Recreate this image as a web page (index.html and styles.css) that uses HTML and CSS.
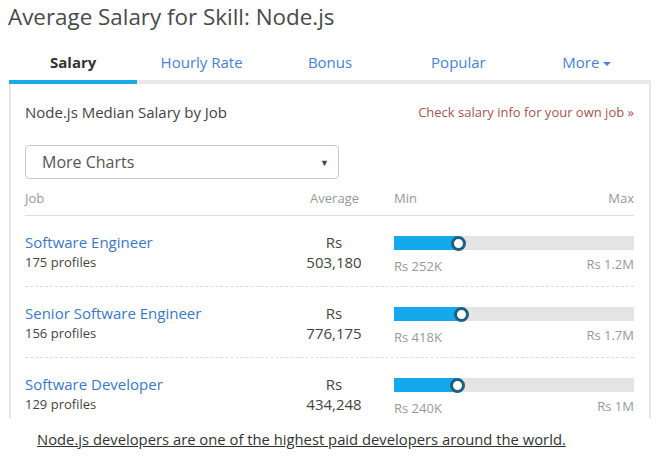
FILE: index.html
```html
<!DOCTYPE html>
<html lang="en-US">
<head>
<meta charset="utf-8">
<link rel="stylesheet" href="styles.css">
</head>
<body>

<h1 class="title">Average Salary for Skill: Node.js</h1>

<div class="tabs">
  <a class="tab active">Salary</a>
  <a class="tab">Hourly Rate</a>
  <a class="tab">Bonus</a>
  <a class="tab">Popular</a>
  <a class="tab">More <span class="caret"></span></a>
</div>

<div class="panel">
  <div class="panel-head">
    <span class="panel-title">Node.js Median Salary by Job</span>
    <a class="own-job">Check salary info for your own job &raquo;</a>
  </div>

  <div class="charts-select">
    <span>More Charts</span>
    <span class="arrow">&#9660;</span>
  </div>

  <div class="row head">
    <div class="job">Job</div>
    <div class="avg">Average</div>
    <div class="range">
      <span>Min</span>
      <span>Max</span>
    </div>
  </div>

  <div class="row">
    <div class="job">
      <a class="job-name">Software Engineer</a>
      <div>175 profiles</div>
    </div>
    <div class="avg">Rs<br>503,180</div>
    <div class="range">
      <div class="bar"><div class="fill" style="width: 63px"></div><span class="dot"></span></div>
      <div class="limits"><span class="min">Rs 252K</span><span>Rs 1.2M</span></div>
    </div>
  </div>

  <div class="row">
    <div class="job">
      <a class="job-name">Senior Software Engineer</a>
      <div>156 profiles</div>
    </div>
    <div class="avg">Rs<br>776,175</div>
    <div class="range">
      <div class="bar"><div class="fill" style="width: 66px"></div><span class="dot"></span></div>
      <div class="limits"><span class="min">Rs 418K</span><span>Rs 1.7M</span></div>
    </div>
  </div>

  <div class="row">
    <div class="job">
      <a class="job-name">Software Developer</a>
      <div>129 profiles</div>
    </div>
    <div class="avg">Rs<br>434,248</div>
    <div class="range">
      <div class="bar"><div class="fill" style="width: 62px"></div><span class="dot"></span></div>
      <div class="limits"><span class="min">Rs 240K</span><span>Rs 1M</span></div>
    </div>
  </div>
</div>

<p class="caption">Node.js developers are one of the highest paid developers around the world.</p>

</body>
</html>
```

FILE: styles.css
```css
body {
    margin: 0;
    font-family: "Open Sans", Arial, sans-serif;
    color: #444444;
    background-color: #ffffff;
}
.title {
    margin: 0;
    padding-left: 8px;
    font-size: 22.4px;
    font-weight: normal;
    line-height: 34px;
    color: #4a4a4a;
}

.tabs {
    display: flex;
    margin: 10px 6px 0 9px;
}
.tab {
    flex: 1;
    height: 36px;
    line-height: 36px;
    text-align: center;
    font-size: 15px;
    color: #4683d6;
    border-bottom: 4px solid #e9e9e9;
}
.tab.active {
    font-weight: bold;
    color: #333333;
    border-bottom-color: #1aaaea;
}
.caret {
    display: inline-block;
    vertical-align: middle;
    border-top: 4px solid #4683d6;
    border-left: 4px solid transparent;
    border-right: 4px solid transparent;
}

.panel {
    margin: 0 6px 0 9px;
    padding: 18px 15px 0 14px;
    height: 316px;
    overflow: hidden;
    border-left: 2px solid #e6e6e6;
    border-right: 2px solid #e6e6e6;
}
.panel-head {
    display: flex;
    justify-content: space-between;
    align-items: center;
    line-height: 20px;
}
.panel-title {
    font-size: 15px;
    color: #444444;
}
.own-job {
    font-size: 13px;
    color: #a5554f;
}

.charts-select {
    display: flex;
    justify-content: space-between;
    align-items: center;
    width: 314px;
    height: 34px;
    box-sizing: border-box;
    margin-top: 23px;
    padding: 0 9px 0 16px;
    border: 1px solid #cccccc;
    border-radius: 4px;
    font-size: 16px;
    color: #555555;
}
.charts-select .arrow {
    font-size: 9px;
    color: #444444;
}

.row {
    display: flex;
    align-items: flex-start;
    padding: 16px 0 14px 0;
    border-bottom: 1px dashed #dddddd;
    font-size: 15px;
    line-height: 20px;
}
.row.head {
    margin-top: 9px;
    padding: 0 0 7px 0;
    border-bottom: 1px solid #dddddd;
    font-size: 13px;
    color: #999999;
}
.job {
    flex: 1;
}
.job div {
    font-size: 13px;
}
.job-name {
    color: #3b78c8;
}
.avg {
    width: 70px;
    text-align: center;
}
.row.head .avg {
    text-align: right;
    padding-right: 10px;
    box-sizing: border-box;
}
.range {
    width: 240px;
    height: 40px;
    margin-left: 25px;
}
.row.head .range {
    display: flex;
    justify-content: space-between;
    height: auto;
}

.bar {
    display: flex;
    align-items: center;
    height: 14px;
    margin-top: 4px;
    background-color: #e4e4e4;
}
.fill {
    height: 14px;
    background-color: #14a9ec;
}
.dot {
    width: 9px;
    height: 9px;
    margin-left: -6px;
    border: 3px solid #1f5f7c;
    border-radius: 50%;
    background-color: #ffffff;
}
.limits {
    display: flex;
    justify-content: space-between;
    margin-top: 6px;
    font-size: 13px;
    line-height: 16px;
    color: #999999;
}
.limits .min {
    margin-top: 2px;
}

.caption {
    margin: 11px 0 0 37px;
    font-size: 14.8px;
    color: #333333;
    text-decoration: underline;
}
```
